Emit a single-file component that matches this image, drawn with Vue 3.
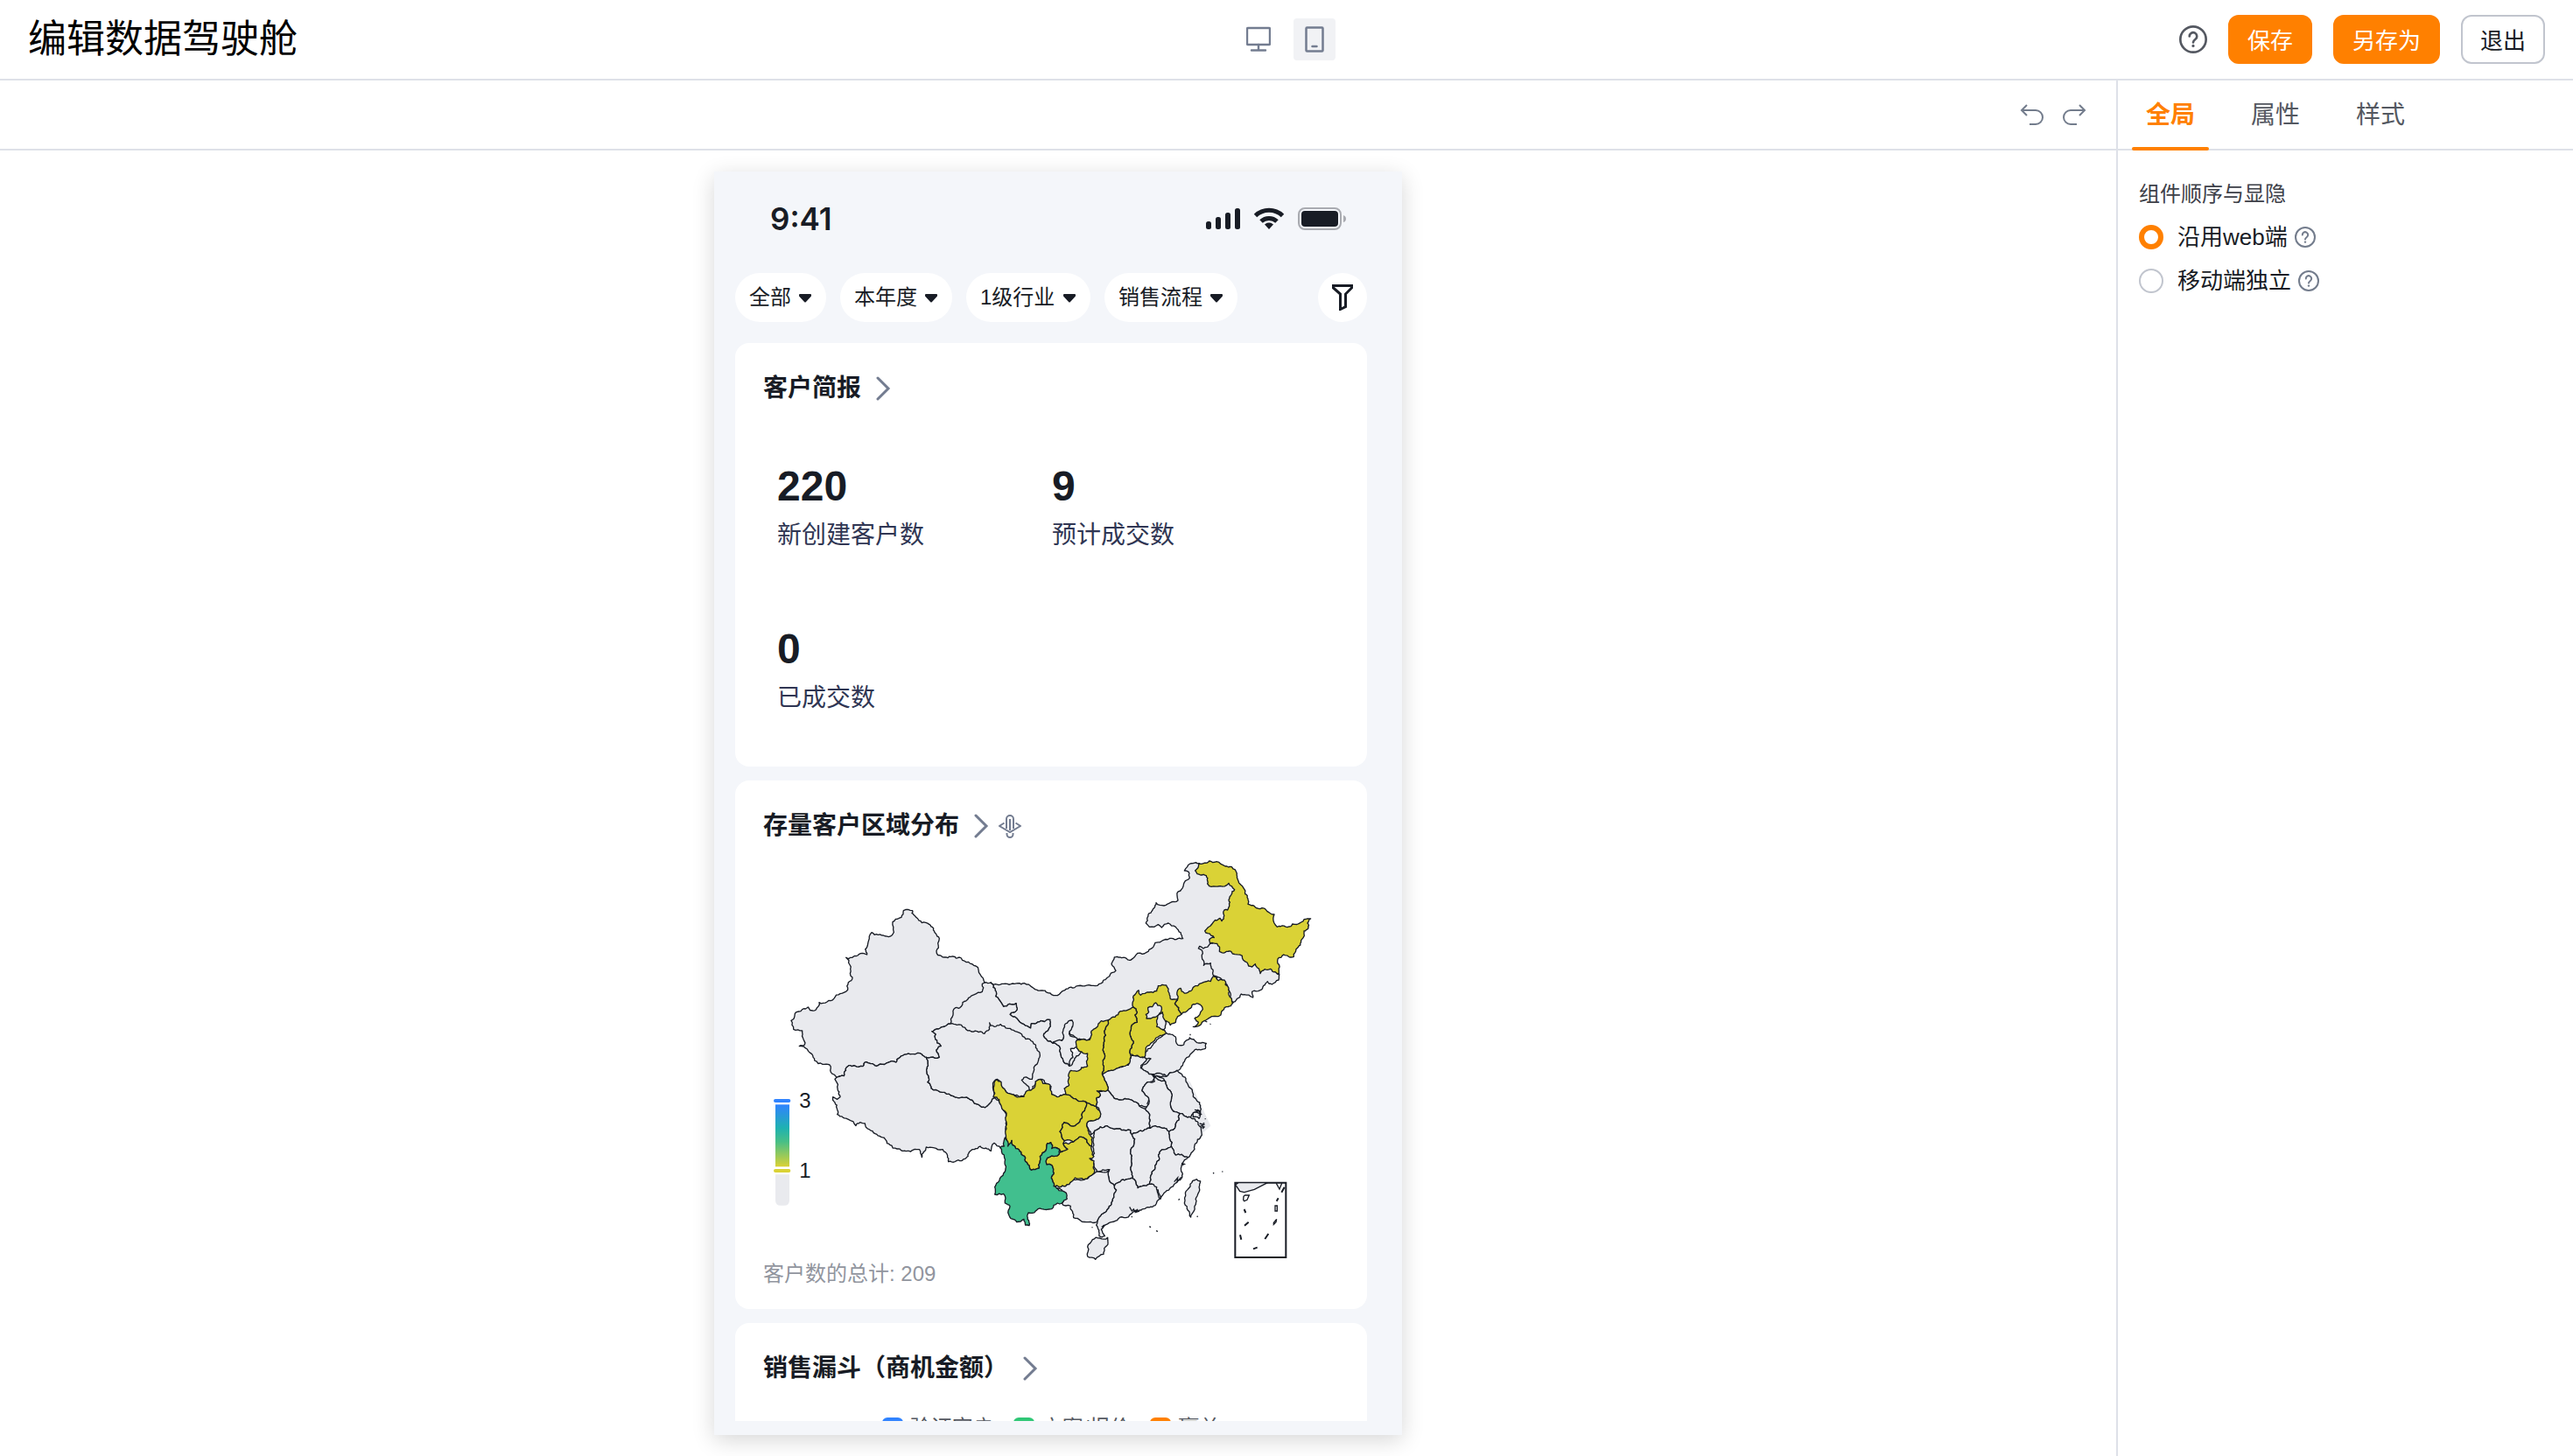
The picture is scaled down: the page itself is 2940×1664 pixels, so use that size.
<script setup>
import { ref } from 'vue'

const device = ref('mobile')
const tabs = ['全局', '属性', '样式']
const activeTab = ref('全局')
const order = ref('web')
const orderOptions = [
  { value: 'web', label: '沿用web端' },
  { value: 'mobile', label: '移动端独立' },
]
const filters = [
  { name: '范围', value: '全部' },
  { name: '时间', value: '本年度' },
  { name: '行业', value: '1级行业' },
  { name: '流程', value: '销售流程' },
]
const metrics = [
  { value: '220', label: '新创建客户数' },
  { value: '9', label: '预计成交数' },
  { value: '0', label: '已成交数' },
]
const stages = [
  { name: '验证客户', color: 'blue' },
  { name: '方案/报价', color: 'green' },
  { name: '赢单', color: 'orange' },
]

const WEST = { dx: 0, dy: 0, sy: 15 / 14 }
const NORTH = { dx: 960, dy: 0, sy: 1 }
const SOUTH = { dx: 750, dy: 510, sy: 1 }
const COAST = { dx: 960, dy: 780, sy: 1 }

// Splits a border segment into small irregular steps. The offsets depend only
// on the two end points, so neighbours that share a segment share its shape.
function roughen(a, b, out) {
  const len = Math.hypot(b[0] - a[0], b[1] - a[1])
  if (len < 9) {
    out.push(b)
    return
  }
  const flip = a[0] > b[0] || (a[0] === b[0] && a[1] > b[1])
  const [p, q] = flip ? [b, a] : [a, b]
  const seed = Math.sin(p[0] * 12.9 + p[1] * 78.2 + q[0] * 37.7 + q[1] * 9.3) * 43758.5
  const amount = (seed - Math.floor(seed) - 0.5) * Math.min(len * 0.4, 10)
  const mid = [
    (p[0] + q[0]) / 2 - ((q[1] - p[1]) / len) * amount,
    (p[1] + q[1]) / 2 + ((q[0] - p[0]) / len) * amount,
  ]
  roughen(a, mid, out)
  roughen(mid, b, out)
}

function border(frame, text) {
  const n = text.trim().split(/\s+/).map(Number)
  const pts = []
  for (let i = 0; i < n.length; i += 2) {
    pts.push([n[i] + frame.dx, Math.round(n[i + 1] * frame.sy) + frame.dy])
  }
  const out = [pts[0]]
  pts.forEach((p, i) => roughen(p, pts[(i + 1) % pts.length], out))
  return 'M' + out.map((p) => p[0].toFixed(1) + ' ' + p[1].toFixed(1)).join('L') + 'Z'
}

const provinces = [
  ['内蒙古', 'none', NORTH, '-203 489 -160 493 -110 491 -70 498 -45 514 -10 523 0 525 25 533 50 515 95 500 155 500 180 488 205 462 225 448 210 425 220 402 240 402 275 412 300 388 330 385 350 370 360 352 380 348 410 337 455 338 448 318 430 298 405 285 382 300 370 290 340 298 328 285 345 250 363 215 390 225 415 213 438 207 435 190 460 145 478 130 475 110 460 105 470 92 490 80 510 80 560 130 650 160 640 220 620 300 580 340 590 400 570 480 500 520 440 570 400 540 300 590 240 620 180 660 130 690 110 684 90 682 65 660 77 640 70 620 55 630 48 670 45 685 10 693 8 696 -20 677 -22 664 0 634 -5 616 -20 623 -65 630 -67 645 -90 632 -115 611 -138 598 -115 584 -117 560 -140 562 -160 571 -167 559 -187 536 -185 520'],
  ['甘肃', 'none', SOUTH, '-15 -21 7 -21 25 10 23 26 43 49 50 61 70 52 93 50 95 74 72 88 95 101 120 122 143 135 145 120 190 113 210 106 210 124 188 154 190 167 218 186 245 205 248 235 275 265 330 200 345 240 338 290 290 350 262 362 240 370 215 362 213 335 195 325 180 310 160 318 150 335 155 370 100 330 50 200 -50 150 -135 135 -150 100 -100 0 -25 -30'],
  ['新疆', 'none', WEST, '457 226 488 226 486 234 500 247 520 265 545 270 560 283 568 300 580 315 577 345 570 355 575 369 620 373 655 378 680 390 705 403 720 430 735 456 727 460 727 485 700 495 680 505 660 520 655 533 635 537 627 560 618 588 590 598 555 612 568 622 566 635 586 660 570 672 580 695 550 695 535 695 520 686 490 685 455 690 435 702 432 711 410 710 385 718 370 721 350 716 330 710 318 724 290 722 270 721 253 755 228 760 208 743 204 720 180 718 152 706 143 685 120 665 100 660 118 655 110 610 80 606 72 578 82 570 85 555 110 542 130 535 137 545 157 543 168 520 195 518 240 492 266 480 268 455 282 440 270 385 260 376 300 370 310 363 332 367 326 350 348 296 370 303 418 304 424 295 420 262 430 253 450 247'],
  ['西藏', 'none', WEST, '228 760 253 755 270 721 290 722 318 724 330 710 350 716 370 721 385 718 410 710 432 711 435 702 455 690 490 685 520 686 535 695 540 705 537 740 543 755 540 775 560 800 590 807 620 818 650 825 680 827 700 843 725 855 745 850 768 825 785 835 800 865 810 900 812 950 815 975 800 985 790 985 768 970 757 995 720 980 700 990 680 1003 656 1027 611 1029 608 1010 592 990 560 985 535 983 520 1015 512 990 470 995 435 988 410 975 380 950 360 940 325 907 308 903 294 915 270 895 230 878 222 840 215 822 230 830 240 822 230 790 222 765'],
  ['青海', 'none', WEST, '555 612 590 598 618 588 640 592 668 600 690 613 715 615 735 620 752 605 752 585 768 597 790 590 815 603 840 612 865 628 890 637 910 655 925 690 918 710 905 735 898 765 870 760 862 768 880 785 890 800 880 815 855 822 835 815 815 812 805 800 790 775 778 765 768 772 765 800 768 825 745 850 725 855 700 843 680 827 650 825 620 818 590 807 560 800 540 775 543 755 537 740 540 705 535 695 550 695 580 695 570 672 586 660 566 635 568 622'],
  ['宁夏', 'none', SOUTH, '218 186 250 178 256 160 262 120 285 108 288 125 275 155 302 170 320 195 302 200 280 205 288 235 278 245 275 265 248 235 245 205'],
  ['吉林', 'none', NORTH, '548 355 525 372 512 364 508 372 520 378 520 400 526 430 550 422 558 445 560 465 575 470 600 490 615 520 625 560 640 545 655 528 665 530 695 540 692 520 720 515 745 485 760 495 783 480 785 462 760 420 700 390 620 350'],
  ['山东', 'none', SOUTH, '605 152 640 165 648 193 668 192 690 170 710 182 745 187 742 205 720 208 690 225 670 250 645 280 610 300 570 292 550 293 520 272 555 240 532 232 545 205 575 175'],
  ['河南', 'none', SOUTH, '388 293 440 272 478 262 487 230 532 235 540 245 520 272 550 293 570 300 560 318 545 320 525 350 548 378 547 410 515 402 490 382 440 378 407 347'],
  ['江苏', 'none', SOUTH, '645 280 672 303 690 340 700 370 725 400 725 425 695 432 690 440 655 428 632 420 622 390 628 365 615 345 605 318 570 300 610 300'],
  ['安徽', 'none', SOUTH, '560 295 580 312 605 318 615 345 628 365 622 390 632 420 655 428 640 470 617 490 595 478 570 470 553 478 550 440 535 412 548 395 548 378 525 350 545 320 568 318'],
  ['湖北', 'none', SOUTH, '407 347 440 378 490 382 515 402 535 412 550 440 553 478 515 488 490 500 485 485 455 485 405 470 362 487 350 500 335 470 340 455 378 443 380 420 367 403 368 375 382 365 365 352'],
  ['浙江', 'none', SOUTH, '655 428 690 440 705 445 727 475 725 510 705 550 683 578 660 568 640 570 625 540 617 490 640 470'],
  ['上海', 'none', SOUTH, '700 425 715 415 723 425 720 445 700 440'],
  ['湖南', 'none', SOUTH, '362 487 405 470 455 485 485 485 490 500 500 515 485 565 490 600 493 650 455 655 430 675 412 655 413 620 370 630 360 600 345 580 358 575'],
  ['江西', 'none', SOUTH, '490 500 515 488 553 478 570 470 595 478 617 490 625 540 585 560 575 595 555 640 550 670 510 683 503 660 493 650 490 600 485 565 500 515'],
  ['福建', 'none', SOUTH, '625 540 640 570 660 568 683 578 660 610 660 650 620 685 588 720 580 690 550 670 555 640 575 595 585 560'],
  ['广西', 'none', SOUTH, '222 677 262 677 290 655 340 650 365 630 413 620 412 655 430 675 437 690 420 740 372 798 340 800 290 785 280 745 250 735 265 715 250 690'],
  ['广东', 'none', SOUTH, '430 675 455 655 493 650 503 660 510 683 550 670 575 680 588 720 570 743 530 755 495 765 470 785 420 800 392 812 385 825 397 848 378 848 368 810 372 798 420 740 437 690'],
  ['台湾', 'none', SOUTH, '712 653 725 660 718 700 705 745 692 783 682 760 670 735 675 695 690 670'],
  ['海南', 'none', COAST, '170 585 197 583 198 600 185 620 183 640 155 658 128 648 128 615 145 590'],
  ['黑龙江', 'low', NORTH, '510 80 545 72 570 74 600 90 622 92 640 115 650 150 668 185 678 220 700 227 735 235 755 252 768 255 768 285 778 298 825 296 830 288 860 282 870 272 893 270 882 285 885 302 870 312 860 350 840 385 835 400 800 393 780 408 785 462 755 442 735 443 720 458 703 425 692 435 680 432 675 420 662 412 658 397 625 390 620 382 580 382 572 355 548 355 545 342 562 335 540 320 530 312 582 268 588 278 597 240 608 240 612 205 632 170 612 148 605 155 545 158 535 122 515 120 497 105'],
  ['辽宁', 'low', NORTH, '560 465 568 470 577 482 597 480 612 508 612 530 625 560 610 572 590 585 580 603 545 610 520 625 500 640 490 640 508 625 495 612 523 580 515 565 490 563 475 580 450 597 440 575 427 560 437 545 437 515 447 508 460 525 490 505 520 490 550 485'],
  ['河北', 'low', NORTH, '303 515 310 532 340 522 365 518 370 500 398 498 408 525 412 545 437 545 427 560 440 575 450 597 437 605 430 625 412 635 398 620 380 640 392 652 398 662 370 675 345 697 328 720 322 745 275 735 285 690 275 655 285 630 298 625 290 600 298 590 285 573 283 555 285 535'],
  ['北京', 'none', NORTH, '362 558 380 570 380 590 365 605 345 612 330 612 328 598 338 590 335 575 350 572'],
  ['天津', 'none', NORTH, '385 590 388 610 397 625 390 650 365 640 368 612'],
  ['山西', 'low', NORTH, '200 617 222 607 240 587 265 583 285 573 298 590 290 600 298 625 285 630 275 655 285 690 275 735 272 765 240 778 215 790 178 803 185 750 183 710 190 670 185 655'],
  ['陕西', 'low', SOUTH, '410 107 395 145 400 160 393 200 395 240 388 293 407 347 370 350 382 365 368 375 367 403 332 388 300 380 262 362 258 342 275 330 280 280 300 283 338 265 338 222 302 205 302 175 345 175 350 150 375 120 385 110'],
  ['四川', 'low', SOUTH, '25 312 42 320 48 340 65 358 90 368 120 370 130 350 155 340 160 318 175 310 185 325 210 330 215 362 240 370 262 362 300 380 332 388 330 410 320 440 295 470 258 458 243 490 262 520 255 530 270 550 245 560 240 550 215 548 212 527 200 530 195 555 175 575 172 615 145 622 125 580 110 560 92 548 78 520 65 540 60 480 55 420 35 380 15 370 18 322'],
  ['重庆', 'low', SOUTH, '332 388 367 403 382 425 378 443 340 455 335 470 355 510 352 540 335 518 310 508 290 525 262 520 243 490 258 458 295 470 320 440 330 410'],
  ['贵州', 'low', SOUTH, '290 525 310 508 335 518 352 540 360 575 345 582 360 590 362 625 325 655 295 648 285 660 262 677 222 677 217 640 215 605 198 603 200 580 215 573 240 568 270 550 255 530'],
  ['云南', 'mid', SOUTH, '55 510 65 540 78 520 92 548 110 560 125 580 145 622 172 615 175 575 195 555 200 530 212 527 215 548 242 550 240 568 215 573 200 580 198 603 215 605 217 640 222 677 240 692 265 700 268 720 250 735 235 735 215 755 180 755 160 762 135 768 138 812 125 810 120 790 95 800 68 775 72 745 55 735 50 703 20 705 20 680 50 633 52 570 38 545 52 540'],
].map(([name, level, frame, pts]) => ({ name, level, d: border(frame, pts) }))
</script>

<template>
  <div class="page">
    <header class="topbar">
      <h1>编辑数据驾驶舱</h1>
      <div class="devices">
        <button type="button" class="device" :class="{ on: device === 'web' }" aria-label="桌面端" @click="device = 'web'">
          <svg width="28" height="30" viewBox="0 0 28 30" fill="none" stroke="#737c90" stroke-width="2.400">
            <rect x="1" y="2" width="26" height="19" rx="1" />
            <path d="M14 21v6M6 27.500h16" stroke-linecap="round" />
          </svg>
        </button>
        <button type="button" class="device" :class="{ on: device === 'mobile' }" aria-label="移动端" @click="device = 'mobile'">
          <svg width="22" height="30" viewBox="0 0 22 30" fill="none" stroke="#737c90" stroke-width="2.500">
            <rect x="1.500" y="1.500" width="19" height="27" rx="1" />
            <path d="M8.500 23h5" stroke-linecap="round" />
          </svg>
        </button>
      </div>
      <div class="actions">
        <svg class="help-lg" viewBox="0 0 24 24" aria-label="帮助">
          <circle cx="12" cy="12" r="11" />
          <path d="M8.800 9.400a3.200 3.200 0 1 1 5 2.600c-1.100.8-1.800 1.300-1.800 2.600" />
          <circle class="dot" cx="12" cy="17.600" r="1.200" />
        </svg>
        <button type="button" class="btn primary">保存</button>
        <button type="button" class="btn primary">另存为</button>
        <button type="button" class="btn">退出</button>
      </div>
    </header>

    <div class="body">
      <main class="workspace">
        <div class="toolbar">
          <button type="button" class="tool" aria-label="撤销">
            <svg width="28" height="26" viewBox="0 0 28 26"><path d="M8 2L2 8l6 6M2 8h16a8 8 0 0 1 0 16h-7" /></svg>
          </button>
          <button type="button" class="tool" aria-label="重做">
            <svg width="28" height="26" viewBox="0 0 28 26"><path d="M20 2l6 6-6 6M26 8H10a8 8 0 0 0 0 16h7" /></svg>
          </button>
        </div>

        <div class="canvas">
          <section class="phone">
            <div class="status">
              <span class="clock">9:41</span>
              <svg width="160" height="26" viewBox="0 0 160 26" fill="#181c25">
                <rect x="0" y="16" width="6" height="9" rx="2.500" />
                <rect x="11" y="11" width="6" height="14" rx="2.500" />
                <rect x="22" y="6" width="6" height="19" rx="2.500" />
                <rect x="33" y="1" width="6" height="24" rx="2.500" />
                <g fill="none" stroke="#181c25" stroke-width="5">
                  <path d="M56.500 9.500a22.500 22.500 0 0 1 31 0" />
                  <path d="M63 16a13 13 0 0 1 18 0" />
                </g>
                <path d="M67 19.500a7.500 7.500 0 0 1 10 0L72 25z" />
                <rect x="106" y="1" width="48" height="24" rx="7" fill="none" stroke="#a9abb1" stroke-width="2" />
                <rect x="109" y="4" width="42" height="18" rx="4" />
                <path d="M157 9v8q3-1 3-4t-3-4z" fill="#a9abb1" />
              </svg>
            </div>

            <div class="filters">
              <label v-for="f in filters" :key="f.name" class="pill">
                <select :aria-label="f.name"><option>{{ f.value }}</option></select>
                <svg width="16" height="14" viewBox="0 0 16 14"><path d="M2 4h12v1L8 11.500 2 5z" /></svg>
              </label>
              <button type="button" class="funnel" aria-label="筛选">
                <svg width="26" height="30" viewBox="0 0 26 30"><path d="M2.500 1.500h21v2.500L16.500 11v14.500l-6 3V11L2.500 4z" /></svg>
              </button>
            </div>

            <div class="feed">
              <article class="card">
                <h2>客户简报
                  <svg class="chev" viewBox="0 0 26 28"><path d="M7 2l12 12L7 26" /></svg>
                </h2>
                <dl class="metrics">
                  <div v-for="m in metrics" :key="m.label">
                    <dd>{{ m.value }}</dd>
                    <dt>{{ m.label }}</dt>
                  </div>
                </dl>
              </article>

              <article class="card">
                <h2>存量客户区域分布
                  <svg class="chev" viewBox="0 0 26 28"><path d="M7 2l12 12L7 26" /></svg>
                  <svg class="drill" viewBox="0 0 26 28">
                    <path d="M9 17V6a4 4 0 0 1 8 0v11M13 6v13M6.500 10.500L1 14l12 7 12-7-5.500-3.500M9.500 22v1.500a3.500 3.500 0 0 0 7 0V22" />
                  </svg>
                </h2>
                <svg class="map" viewBox="-24 12 1974 1428" role="img" aria-label="存量客户区域分布">
                  <defs>
                    <linearGradient id="scale" x1="0" y1="0" x2="0" y2="1">
                      <stop offset="0" stop-color="#3083ff" />
                      <stop offset="0.380" stop-color="#1fb2b0" />
                      <stop offset="0.600" stop-color="#48bf86" />
                      <stop offset="1" stop-color="#dad236" />
                    </linearGradient>
                  </defs>
                  <rect x="12" y="888" width="58" height="12" rx="6" fill="#3083ff" />
                  <rect x="18" y="907" width="48" height="213" fill="url(#scale)" />
                  <rect x="12" y="1128" width="58" height="12" rx="6" fill="#dad236" />
                  <path d="M18 1147h48v88q0 18-18 18H36q-18 0-18-18z" fill="#e9eaee" />
                  <text x="100" y="918">3</text>
                  <text x="100" y="1158">1</text>
                  <path d="M870 890L1140 640l300 190 70 150-220 200-140 90-150-20-200-190z" fill="#e9eaee" />
                  <path v-for="p in provinces" :key="p.name" class="prov" :class="p.level" :d="p.d" />
                  <g class="islands">
                    <path d="M1300 1325l5 3M1323 1340l6 2M1519 1140l2 4M1549 1137h3M1403 1230l-3 5M1463 1289l3 3M1490 956h3M1484 970l5 3M1480 985h4M1440 665v5M1438 676v4M1490 620l8 4M1508 632l2-2M1104 1327v3M1240 1290v4" />
                    <path d="M1232 1258l8 14 6-6 4 8 10-8-6 10 12-4" />
                    <path d="M1455 925l18 4-14 3 18 8-8 4M1472 972l14 4-8 4 10 4-6 6M1410 1108l10 3-8 4M1385 1172l12-14-2 14 14-16M1136 1326l10-4-6 8" />
                  </g>
                  <g class="inset">
                    <path d="M1594 1175h174v256h-174z" class="frame" />
                    <path d="M1595 1182l10-7h100l-45 23-35 10-15-4z" fill="#e9eaee" />
                    <path d="M1735 1177l11 20 8-20M1623 1222l5-4h14l-7 16-10 4-3-4zM1731 1254h7v18h-7zM1726 1312l10-12-2 10-8 8z" />
                    <path d="M1753 1208l10-18M1736 1238l6-10M1625 1266l5 12M1626 1322l14-12M1611 1354l4 16M1696 1368l12-18M1656 1402l14-5" stroke-width="6" />
                  </g>
                </svg>
                <p class="total">客户数的总计: 209</p>
              </article>

              <article class="card">
                <h2>销售漏斗（商机金额）
                  <svg class="chev" viewBox="0 0 26 28"><path d="M7 2l12 12L7 26" /></svg>
                </h2>
                <ul class="legend">
                  <li v-for="s in stages" :key="s.name"><i :class="s.color"></i>{{ s.name }}</li>
                </ul>
              </article>
            </div>
          </section>
        </div>
      </main>

      <aside class="panel">
        <div class="tabs" role="tablist">
          <button
            v-for="t in tabs"
            :key="t"
            type="button"
            role="tab"
            :aria-selected="activeTab === t"
            :class="{ on: activeTab === t }"
            @click="activeTab = t"
          >{{ t }}</button>
        </div>
        <fieldset class="order">
          <legend>组件顺序与显隐</legend>
          <div v-for="o in orderOptions" :key="o.value" class="choice">
            <label>
              <input v-model="order" type="radio" name="order" :value="o.value" />
              {{ o.label }}
            </label>
            <svg class="help-sm" viewBox="0 0 24 24" aria-label="说明">
              <circle cx="12" cy="12" r="11" />
              <path d="M8.800 9.400a3.200 3.200 0 1 1 5 2.600c-1.100.8-1.800 1.300-1.800 2.600" />
              <circle class="dot" cx="12" cy="17.600" r="1.200" />
            </svg>
          </div>
        </fieldset>
      </aside>
    </div>
  </div>
</template>

<style>
body {
  background: #fff;
}
</style>

<style scoped>
* {
  box-sizing: border-box;
}
.page {
  display: flex;
  flex-direction: column;
  height: 100vh;
  font-family: "Liberation Sans", "Noto Sans CJK SC", sans-serif;
  color: #181c25;
}
svg {
  display: block;
  flex: none;
}
button {
  font-family: inherit;
  padding: 0;
  border: 0;
  background: none;
  cursor: pointer;
}
h1, h2, p, dl, dd, ul {
  margin: 0;
  padding: 0;
}

.topbar {
  flex: none;
  display: grid;
  grid-template-columns: 1fr auto 1fr;
  align-items: center;
  height: 92px;
  padding: 0 32px;
  border-bottom: 2px solid #dee1e8;
}
h1 {
  font-size: 44px;
  line-height: 64px;
  font-weight: 400;
  color: #000;
}
.devices {
  display: flex;
  gap: 16px;
}
.device {
  display: flex;
  align-items: center;
  justify-content: center;
  width: 48px;
  height: 48px;
  border-radius: 4px;
}
.device.on {
  background: #f1f2f5;
}
.actions {
  display: flex;
  align-items: center;
  justify-content: flex-end;
  gap: 24px;
}
.btn {
  height: 56px;
  padding: 4px 20px 0;
  border: 2px solid #c1c5ce;
  border-radius: 12px;
  font-size: 26px;
  line-height: 40px;
  color: #181c25;
}
.btn.primary {
  border-color: #ff8000;
  background: #ff8000;
  color: #fff;
}
.help-lg, .help-sm {
  fill: none;
  stroke-linecap: round;
}
.help-lg {
  width: 32px;
  height: 32px;
  stroke: #545861;
  stroke-width: 2;
}
.help-sm {
  width: 24px;
  height: 24px;
  stroke: #737c8c;
  stroke-width: 2;
}
.dot {
  stroke: none;
}
.help-lg .dot {
  fill: #545861;
}
.help-sm .dot {
  fill: #737c8c;
}

.body {
  flex: 1;
  min-height: 0;
  display: flex;
}
.workspace {
  flex: 1;
  min-width: 0;
  display: flex;
  flex-direction: column;
}
.toolbar {
  flex: none;
  display: flex;
  align-items: center;
  justify-content: flex-end;
  gap: 20px;
  height: 80px;
  padding-right: 34px;
  border-bottom: 2px solid #dee1e8;
}
.tool svg {
  fill: none;
  stroke: #737c8c;
  stroke-width: 2;
}
.canvas {
  flex: 1;
  min-height: 0;
  display: flex;
  justify-content: center;
  padding: 24px;
}

.phone {
  display: flex;
  flex-direction: column;
  width: 786px;
  padding: 0 40px 16px 24px;
  background: #f4f6fa;
  box-shadow: 0 6px 24px rgba(0, 0, 0, 0.16);
}
.status {
  flex: none;
  display: flex;
  align-items: center;
  justify-content: space-between;
  height: 108px;
  padding: 0 24px 0 40px;
}
.clock {
  font-family: Inter, sans-serif;
  font-size: 35px;
  line-height: 40px;
  font-weight: 600;
}
.filters {
  flex: none;
  display: flex;
  gap: 16px;
  padding: 8px 0 24px;
}
.pill {
  display: flex;
  align-items: center;
  gap: 8px;
  height: 56px;
  padding: 0 16px;
  border-radius: 28px;
  background: #fff;
}
.pill select {
  appearance: none;
  padding: 0;
  border: 0;
  background: none;
  font-family: inherit;
  font-size: 24px;
  line-height: 36px;
  color: #181c25;
}
.pill path {
  fill: #181c25;
  stroke: #181c25;
  stroke-width: 2;
  stroke-linejoin: round;
}
.funnel {
  display: flex;
  align-items: center;
  justify-content: center;
  width: 56px;
  height: 56px;
  margin-left: auto;
  border-radius: 28px;
  background: #fff;
}
.funnel path {
  fill: none;
  stroke: #181c25;
  stroke-width: 3;
}

.feed {
  flex: 1;
  min-height: 0;
  display: flex;
  flex-direction: column;
  gap: 16px;
  overflow: hidden;
}
.card {
  flex: none;
  padding: 32px 32px 24px;
  border-radius: 16px;
  background: #fff;
}
h2 {
  display: flex;
  align-items: center;
  font-size: 28px;
  line-height: 40px;
  font-weight: 600;
}
.chev, .drill {
  width: 26px;
  height: 28px;
  fill: none;
  stroke: #737c90;
}
.chev {
  margin-left: 12px;
  stroke-width: 3;
  stroke-linecap: round;
}
.drill {
  margin-left: 7px;
  stroke-width: 2;
}
.metrics {
  display: grid;
  grid-template-columns: 1fr 1fr;
  row-gap: 82px;
  padding: 64px 14px 34px 16px;
}
.metrics div {
  display: flex;
  flex-direction: column;
  gap: 8px;
}
.metrics dd {
  font-size: 48px;
  line-height: 56px;
  font-weight: 700;
}
.metrics dt {
  font-size: 28px;
  line-height: 40px;
  color: #303653;
}

.map {
  width: 100%;
  height: auto;
}
.map text {
  font-size: 72px;
  fill: #181c25;
}
.prov {
  fill: #e9eaee;
  stroke: #181c25;
  stroke-width: 4;
  stroke-linejoin: round;
}
.prov.low {
  fill: #dad236;
}
.prov.mid {
  fill: #41bf8e;
}
.islands, .inset {
  fill: none;
  stroke: #181c25;
  stroke-width: 4;
}
.frame {
  stroke-width: 6;
}
.total {
  font-size: 24px;
  line-height: 32px;
  color: #91959e;
}
.legend {
  display: flex;
  justify-content: center;
  gap: 22px;
  margin-top: 32px;
  list-style: none;
}
.legend li {
  display: flex;
  align-items: center;
  gap: 8px;
  font-size: 24px;
  line-height: 32px;
  color: #545861;
}
.legend i {
  width: 24px;
  height: 24px;
  border-radius: 6px;
}
.blue {
  background: #3083ff;
}
.green {
  background: #30c776;
}
.orange {
  background: #ff8000;
}

.panel {
  flex: none;
  width: 522px;
  border-left: 2px solid #dee1e8;
}
.tabs {
  display: flex;
  gap: 32px;
  height: 80px;
  padding: 0 16px;
  border-bottom: 2px solid #dee1e8;
}
.tabs button {
  position: relative;
  height: 78px;
  padding: 2px 16px 0;
  font-size: 28px;
  line-height: 40px;
  color: #545861;
}
.tabs .on {
  font-weight: 600;
  color: #ff8000;
}
.tabs .on::after {
  content: "";
  position: absolute;
  left: 0;
  right: 0;
  bottom: -2px;
  height: 4px;
  border-radius: 2px;
  background: #ff8000;
}
.order {
  margin: 0;
  padding: 32px 24px;
  border: 0;
}
.order legend {
  float: left;
  width: 100%;
  padding: 0;
  margin-bottom: 6px;
  font-size: 24px;
  line-height: 36px;
  color: #3d4048;
}
.choice {
  clear: both;
  display: flex;
  align-items: center;
  gap: 8px;
  height: 50px;
}
.choice label {
  display: flex;
  align-items: center;
  gap: 16px;
  font-size: 26px;
  line-height: 40px;
}
.choice input {
  appearance: none;
  width: 28px;
  height: 28px;
  margin: 0;
  border: 2px solid #c1c5ce;
  border-radius: 50%;
}
.choice input:checked {
  border: 6px solid #ff8000;
}
</style>
